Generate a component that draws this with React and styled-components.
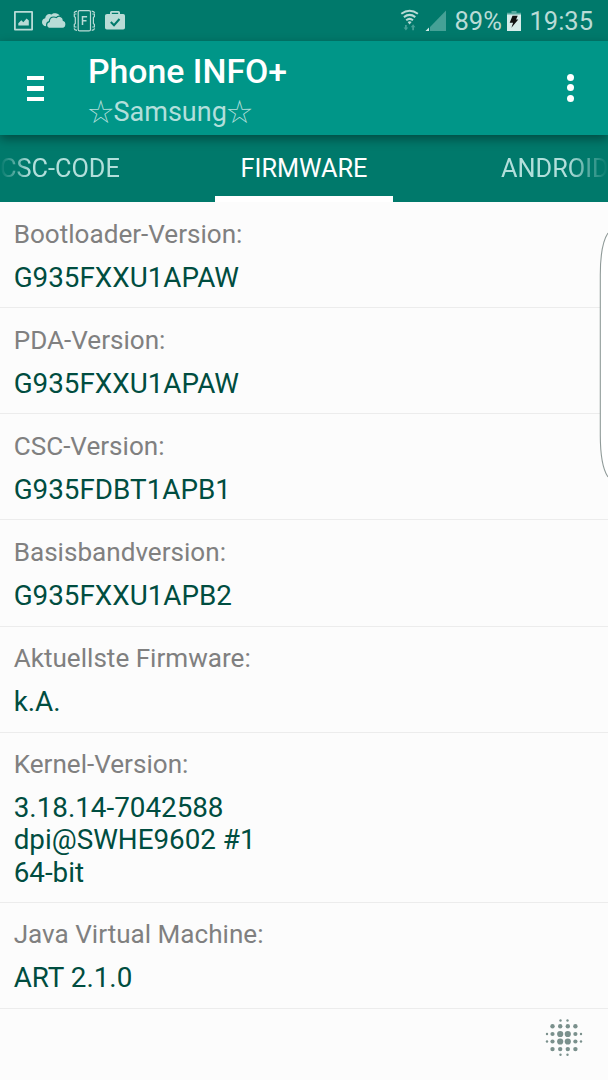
import React from "react";
import styled, { createGlobalStyle, css } from "styled-components";

const rows = [
  { label: "Bootloader-Version:", lines: ["G935FXXU1APAW"] },
  { label: "PDA-Version:", lines: ["G935FXXU1APAW"] },
  { label: "CSC-Version:", lines: ["G935FDBT1APB1"] },
  { label: "Basisbandversion:", lines: ["G935FXXU1APB2"] },
  { label: "Aktuellste Firmware:", lines: ["k.A."] },
  {
    label: "Kernel-Version:",
    lines: ["3.18.14-7042588", "dpi@SWHE9602 #1", "64-bit"],
  },
  { label: "Java Virtual Machine:", lines: ["ART 2.1.0"] },
];

// x, y, radius
const dots = [
  [30.5, 20.5, 1.2],
  [37.5, 20.5, 1.2],
  [22.5, 26.3, 2.2],
  [30.2, 26.3, 2.2],
  [37.8, 26.3, 2.2],
  [45.4, 26.3, 2.2],
  [17, 34, 1.2],
  [22.5, 34, 2.1],
  [30.2, 34, 3.1],
  [37.8, 34, 3.1],
  [45.4, 34, 2.1],
  [51, 34, 1.2],
  [17, 41.5, 1.2],
  [22.5, 41.5, 2.1],
  [30.2, 41.5, 3.1],
  [37.8, 41.5, 3.1],
  [45.4, 41.5, 2.1],
  [51, 41.5, 1.2],
  [22.5, 49.1, 2.2],
  [30.2, 49.1, 2.2],
  [37.8, 49.1, 2.2],
  [45.4, 49.1, 2.2],
  [30.5, 54.8, 1.2],
  [37.5, 54.8, 1.2],
];

const NotificationIcons = () => (
  <svg width="130" height="40" viewBox="0 0 130 40" fill="#b9dbd6">
    <path
      fillRule="evenodd"
      d="M15 11h17q1 0 1 1v17.500q0 1-1 1H15q-1 0-1-1V12q0-1 1-1zM15.800 12.800v15.900h15.400V12.800z"
    />
    <path d="M18.300 25.400v-2.200l3-3 2 2 3.300-3.700 2.200 2v4.900z" />
    <path d="M46.300 26.200c-2.700 0-4.300-1.700-4.300-4 0-2.100 1.300-3.600 3.200-4 .2-2.500 2-4.200 4.300-4.200.8 0 1.500.2 2.100.5 1-1.100 2.500-1.500 4.200-1.200 2.400.3 4 1.900 4.500 3.900-1.800-.3-3.600.3-4.700 1.500-3.500-1-6.700 1-7 4.200-1.400.5-2.300 1.800-2.300 3.300z" />
    <path
      d="M50.300 28.300c-2.200 0-3.700-1.500-3.700-3.400 0-1.700 1.100-3 2.700-3.300.1-2.900 2.200-4.600 4.600-4.600.9 0 1.700.2 2.400.6 1.100-1.300 2.600-1.700 4.100-1.300 1.900.5 3 2 3 4.100 1.600.3 2.600 1.700 2.600 3.700 0 2.500-1.500 4.200-3.500 4.200z"
      stroke="#00796b"
      strokeWidth="1.200"
    />
    <g fill="none" stroke="#b9dbd6" strokeWidth="1.200">
      <rect x="78.200" y="10.600" width="12.300" height="20.300" rx="1.500" />
      <path d="M82.500 25v-8.200h4.600M82.500 20.700h4" strokeWidth="1.500" />
      <path d="M76.500 14h-2.200v2.500l1 1v6l-1 1V27h2.200M92.300 14h2.100v2.500l-1 1v6l1 1V27h-2.100" />
      <path d="M77 11.200c-1.500.2-2.700 1-2.900 2M91.700 11.200c1.500.2 2.700 1 2.900 2M77 30.300c-1.500-.2-2.700-1-2.900-2M91.700 30.300c1.500-.2 2.700-1 2.900-2" />
    </g>
    <path
      fillRule="evenodd"
      d="M107 14h3v-1.500q0-1.500 1.500-1.500h7q1.500 0 1.500 1.500V14h3.200q1.800 0 1.800 1.800v12q0 1.800-1.800 1.800h-16.400q-1.800 0-1.800-1.800v-12Q105 14 107 14zM111.800 14h6.400v-1.200h-6.400z"
    />
    <path d="M110.800 22l3.200 3.200 5.500-6.200" fill="none" stroke="#00796b" strokeWidth="2" />
  </svg>
);

const SignalIcons = () => (
  <svg width="50" height="40" viewBox="0 0 50 40">
    <g fill="none" stroke="#b9dbd6" strokeWidth="2">
      <path d="M1.300 13.800q8.300-6 16.600 0" />
      <path d="M3.900 17.100q5.700-4.400 11.400 0" />
      <path d="M6.200 20.200q3.400-2.700 6.800 0" />
    </g>
    <path d="M7.600 22q2-1.600 4 0l-2 2.400z" fill="#b9dbd6" />
    <path
      d="M5.900 25v3.600M13.100 30.200v-3.600"
      stroke="#45a196"
      strokeWidth="1.800"
    />
    <path d="M3.600 27.500h4.600l-2.300 3zM10.800 27.200h4.600l-2.300-3z" fill="#45a196" />
    <path d="M30 27L46 10.500V31H30z" fill="#45a196" />
    <path d="M25.500 31l3.500-3.500V31z" fill="#d4ebe8" />
  </svg>
);

const BatteryIcon = () => (
  <svg width="14" height="40" viewBox="0 0 14 40">
    <path d="M4.500 11h5v1.800H14V15H0v-2.200h4.500z" fill="#57a89e" />
    <path d="M0 14.500h14V31H0z" fill="#d7ecea" />
    <path d="M5.500 15.800h5.200l-1.600 3.700h2.200l-6.900 8.200 1.700-5H2.700z" fill="#111" />
  </svg>
);

const App = () => {
  return (
    <Screen>
      <GlobalStyle />
      <StatusBar>
        <NotificationIcons />
        <StatusRight>
          <SignalIcons />
          <StatusText $width={47}>89%</StatusText>
          <BatteryIcon />
          <StatusText $width={64}>19:35</StatusText>
        </StatusRight>
      </StatusBar>
      <AppBar>
        <MenuButton aria-label="Menu">
          <span />
          <span />
          <span />
        </MenuButton>
        <Titles>
          <Title>Phone INFO+</Title>
          <Subtitle>
            <Star>☆</Star>Samsung<Star>☆</Star>
          </Subtitle>
        </Titles>
        <MoreButton aria-label="More">
          <i />
          <i />
          <i />
        </MoreButton>
      </AppBar>
      <Tabs>
        <Tab $side="left">CSC-CODE</Tab>
        <Tab $active>FIRMWARE</Tab>
        <Tab $side="right">ANDROID</Tab>
      </Tabs>
      <List>
        {rows.map((row) => (
          <Row key={row.label} $multiline={row.lines.length > 1}>
            <Label>{row.label}</Label>
            {row.lines.map((line) => (
              <Value key={line}>{line}</Value>
            ))}
          </Row>
        ))}
      </List>
      <EdgeHandle width="10" height="250" viewBox="0 0 10 250">
        <path
          d="M10 3C4.500 11 2.300 26 2.300 45v160c0 19 2.200 34 7.700 42"
          fill="#fff"
          stroke="#8f9a98"
          strokeWidth="1.100"
        />
      </EdgeHandle>
      <DotsButton width="78" height="80" viewBox="0 0 78 80">
        {dots.map(([x, y, r]) => (
          <circle key={`${x}-${y}`} cx={x} cy={y} r={r} />
        ))}
      </DotsButton>
    </Screen>
  );
};

const GlobalStyle = createGlobalStyle`
  * {
    box-sizing: border-box;
  }
  body {
    margin: 0;
    background: #fcfcfc;
    font-family: Roboto, "Noto Sans", sans-serif;
  }
`;

const Screen = styled.main`
  position: relative;
  width: 608px;
  height: 1080px;
  overflow: hidden;
  background: #fcfcfc;
`;

const StatusBar = styled.div`
  display: flex;
  justify-content: space-between;
  height: 40.500px;
  padding-right: 14.500px;
  background: #00796b;
`;

const StatusRight = styled.div`
  display: flex;
  svg:first-child {
    margin-right: 4.500px;
  }
  svg:not(:first-child) {
    margin: 0 8.500px 0 5.500px;
  }
`;

const StatusText = styled.span`
  width: ${({ $width }) => $width}px;
  font-size: 25.500px;
  line-height: 43px;
  color: #b9dbd6;
  white-space: nowrap;
`;

const AppBar = styled.header`
  position: relative;
  z-index: 1;
  display: flex;
  height: 94.500px;
  background: #009688;
  box-shadow: 0 4px 10px rgba(0, 0, 0, 0.38);
`;

const MenuButton = styled.button`
  display: flex;
  flex-direction: column;
  gap: 6px;
  width: 88px;
  padding: 35.500px 0 0 27px;
  border: none;
  background: none;
  span {
    width: 17px;
    height: 4.300px;
    background: #fff;
  }
`;

const Titles = styled.div`
  flex: 1;
  padding-top: 11px;
`;

const Title = styled.h1`
  margin: 0;
  font-size: 33.800px;
  font-weight: 500;
  line-height: 40px;
  color: #fff;
`;

const Subtitle = styled.div`
  height: 40px;
  margin-top: -2px;
  font-size: 27px;
  line-height: 40px;
  color: #b2dfdb;
`;

const Star = styled.span`
  font-family: "Noto Sans CJK JP", sans-serif;
  font-size: 25.500px;
  font-weight: 300;
`;

const MoreButton = styled.button`
  display: flex;
  flex-direction: column;
  gap: 3.200px;
  width: 41px;
  padding: 33.700px 0 0;
  border: none;
  background: none;
  i {
    width: 7px;
    height: 7px;
    border-radius: 50%;
    background: #fff;
  }
`;

const Tabs = styled.nav`
  display: grid;
  grid-template-columns: 215.300px 177.500px 215.200px;
  grid-template-rows: 67.200px;
  height: 67.200px;
  background: #00796b;
`;

const fade = {
  left: "linear-gradient(to right, transparent, #000 30px)",
  right: "linear-gradient(to left, transparent, #000 40px)",
};

const Tab = styled.a`
  font-size: 25.300px;
  line-height: 68px;
  white-space: nowrap;
  color: #b2dfdb;
  ${({ $active }) =>
    $active &&
    css`
      border-bottom: 6px solid #fff;
      text-align: center;
      color: #fff;
    `}
  ${({ $side }) =>
    $side &&
    css`
      padding-left: ${$side === "left" ? "0" : "108.200px"};
      mask-image: ${fade[$side]};
    `}
`;

const List = styled.section`
  display: flex;
  flex-direction: column;
`;

const Row = styled.div`
  padding: 16.500px 13.700px ${({ $multiline }) => ($multiline ? 12.1 : 13.2)}px;
  border-bottom: 1px solid #ececec;
`;

const Label = styled.div`
  margin-bottom: 12.900px;
  font-size: 26.100px;
  line-height: 30px;
  color: #808080;
`;

const Value = styled.div`
  font-size: 27.800px;
  line-height: 32.500px;
  color: #004d40;
`;

const EdgeHandle = styled.svg`
  position: absolute;
  top: 230px;
  right: 0;
`;

const DotsButton = styled.svg`
  position: absolute;
  right: 0;
  bottom: 0;
  fill: #7a908c;
`;

export default App;
